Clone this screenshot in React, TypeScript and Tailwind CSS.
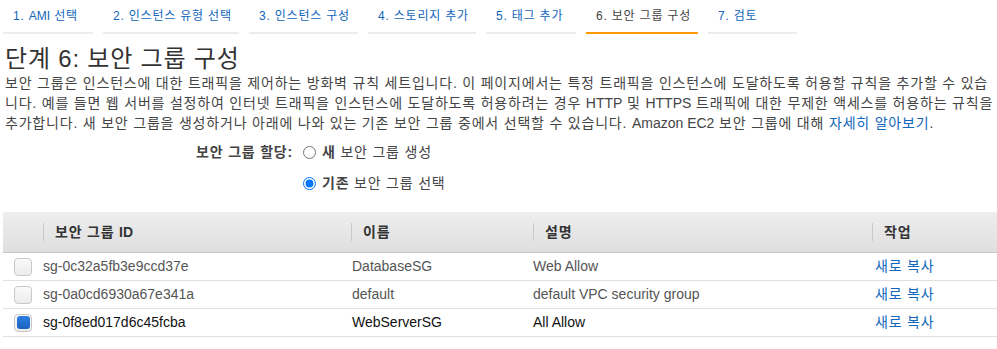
import React from "react";

const tabs = [
  { label: "1. AMI 선택", w: 90 },
  { label: "2. 인스턴스 유형 선택", w: 136 },
  { label: "3. 인스턴스 구성", w: 109 },
  { label: "4. 스토리지 추가", w: 108 },
  { label: "5. 태그 추가", w: 90 },
  { label: "6. 보안 그룹 구성", w: 112, active: true },
  { label: "7. 검토", w: 89 },
];

const rows = [
  { id: "sg-0c32a5fb3e9ccd37e", name: "DatabaseSG", desc: "Web Allow", checked: false },
  { id: "sg-0a0cd6930a67e341a", name: "default", desc: "default VPC security group", checked: false },
  { id: "sg-0f8ed017d6c45fcba", name: "WebServerSG", desc: "All Allow", checked: true },
];

// Korean runs get slight tracking (to match wider hangul of reference font); Latin runs stay normal.
function T({ children }: { children: string }) {
  const parts = children.split(/([A-Za-z][A-Za-z0-9\-]*(?: [A-Za-z0-9][A-Za-z0-9\-]*)*)/);
  return (
    <>
      {parts.map((p, i) =>
        i % 2 === 1 ? (
          <span key={i} className="tracking-normal">
            {p}
          </span>
        ) : (
          <React.Fragment key={i}>{p}</React.Fragment>
        )
      )}
    </>
  );
}

function Checkbox({ checked }: { checked: boolean }) {
  return (
    <div className="w-[18px] h-[18px] rounded-[4px] border border-[#c8c8c8] bg-gradient-to-b from-[#fafafa] to-[#ececec] flex items-center justify-center">
      {checked && <div className="w-[13px] h-[13px] rounded-[3px] bg-gradient-to-b from-[#2d7fe0] to-[#1a62c0]" />}
    </div>
  );
}

export default function App() {
  return (
    <div
      className="w-[997px] h-[349px] overflow-hidden bg-white text-[#444] tracking-[0.05em]"
      style={{ fontFamily: '"Liberation Sans", Arial, "Noto Sans CJK KR", sans-serif' }}
    >
      <div className="flex gap-[10px] pl-[3px]">
        {tabs.map((t) => (
          <div
            key={t.label}
            style={{ width: t.w }}
            className={`h-[34px] pl-[10px] flex items-center text-[12px] whitespace-nowrap border-b-2 ${
              t.active ? "border-[#ff9900] text-[#444]" : "border-[#eaeded] text-[#1166bb]"
            }`}
          >
            <span>
              <T>{t.label}</T>
            </span>
          </div>
        ))}
      </div>

      <h1 className="mt-[11px] pl-[5px] text-[24px] leading-[28px] text-[#333]">단계 6: 보안 그룹 구성</h1>

      <p className="pl-[5px] text-[14px] leading-[20px] text-[#444]">
        <T>
          보안 그룹은 인스턴스에 대한 트래픽을 제어하는 방화벽 규칙 세트입니다. 이 페이지에서는 특정 트래픽을 인스턴스에 도달하도록 허용할 규칙을 추가할 수 있습니다. 예를 들면 웹 서버를 설정하여 인터넷 트래픽을 인스턴스에 도달하도록 허용하려는 경우 HTTP 및 HTTPS 트래픽에 대한 무제한 액세스를 허용하는 규칙을 추가합니다. 새 보안 그룹을 생성하거나 아래에 나와 있는 기존 보안 그룹 중에서 선택할 수 있습니다. Amazon EC2 보안 그룹에 대해
        </T>{" "}
        <span className="text-[#1166bb]">자세히 알아보기</span>.
      </p>

      <div className="flex mt-[7px] text-[14px]">
        <div className="w-[293px] text-right font-bold text-[#444] leading-[24px]">보안 그룹 할당:</div>
        <div className="ml-[10px] flex flex-col gap-[7px]">
          <label className="flex items-center h-[24px] gap-[6px]">
            <input type="radio" name="sg" readOnly className="m-0 w-[13px] h-[13px]" />
            <span>
              <b>새</b> 보안 그룹 생성
            </span>
          </label>
          <label className="flex items-center h-[24px] gap-[6px]">
            <input type="radio" name="sg" readOnly checked className="m-0 w-[13px] h-[13px]" />
            <span>
              <b>기존</b> 보안 그룹 선택
            </span>
          </label>
        </div>
      </div>

      <div className="mt-[17px] ml-[3px] text-[14px]">
        <div className="grid grid-cols-[40px_308px_182px_339px_1fr] h-[41px] bg-gradient-to-b from-[#eeeeee] to-[#dfdfdf] border-b border-[#c6c6c6] font-bold text-[#333]">
          <div />
          {["보안 그룹 ID", "이름", "설명", "작업"].map((h) => (
            <div key={h} className="flex items-center">
              <div className="w-px h-[18px] bg-[#c9c9c9]" />
              <span className="ml-[11px]">
                <T>{h}</T>
              </span>
            </div>
          ))}
        </div>
        {rows.map((r) => (
          <div
            key={r.id}
            className={`grid grid-cols-[40px_308px_182px_339px_1fr] h-[28px] items-center border-b border-[#e1e1e1] ${
              r.checked ? "text-[#111]" : "text-[#555]"
            }`}
          >
            <div className="pl-[11px]">
              <Checkbox checked={r.checked} />
            </div>
            <div className="tracking-normal">{r.id}</div>
            <div className="pl-[1px] tracking-normal">{r.name}</div>
            <div className="tracking-normal">{r.desc}</div>
            <div className="pl-[3px] text-[#1166bb]">새로 복사</div>
          </div>
        ))}
      </div>
    </div>
  );
}
